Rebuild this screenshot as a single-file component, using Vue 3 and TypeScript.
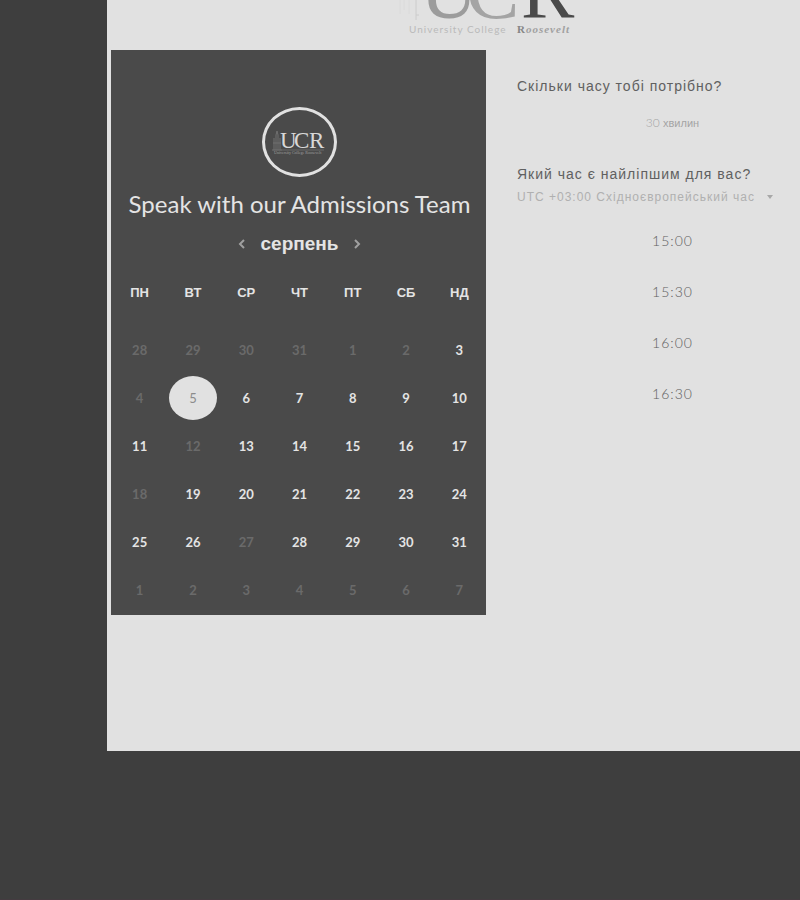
<script setup lang="ts">
import { ref } from 'vue'

interface Day {
  label: number
  open: boolean
}

const weekdays: string[] = ['ПН', 'ВТ', 'СР', 'ЧТ', 'ПТ', 'СБ', 'НД']
const closedDays = [4, 12, 18, 27]

const previous: Day[] = [28, 29, 30, 31].map((label) => ({ label, open: false }))
const current: Day[] = Array.from({ length: 31 }, (_, i) => ({
  label: i + 1,
  open: i > 1 && !closedDays.includes(i + 1),
}))
const next: Day[] = Array.from({ length: 7 }, (_, i) => ({ label: i + 1, open: false }))
const days: Day[] = [...previous, ...current, ...next]
const weeks: Day[][] = Array.from({ length: 6 }, (_, i) => days.slice(i * 7, i * 7 + 7))

const slots: string[] = ['15:00', '15:30', '16:00', '16:30']
const selected = ref(5)

function pick(day: Day) {
  if (day.open) selected.value = day.label
}
</script>

<template>
  <div class="page">
    <main class="panel">
      <header class="brand">
        <svg class="logo" width="180" height="90" viewBox="0 0 180 90" role="img" aria-label="University College Roosevelt">
          <path d="M1 20V54M5 16V50M10 6V54" fill="none" stroke="#dadada" />
          <path d="M17 14V60M20 55H17" fill="none" stroke="#cccccc" />
          <g class="logo-letters">
            <text x="21" y="58" fill="#9c9c9c">U</text>
            <text x="67" y="58" fill="#a4a4a4">C</text>
            <text x="122" y="58" fill="#4a4a4a">R</text>
          </g>
          <text class="logo-name" x="10" y="73">University College</text>
          <text class="logo-name-end" x="118" y="73"><tspan class="upright">R</tspan>oosevelt</text>
        </svg>
      </header>

      <div class="columns">
        <section class="calendar">
          <div class="avatar">
            <svg width="60" height="34" viewBox="0 0 60 34" role="img" aria-label="UCR">
              <path d="M4 25V13M6 25V10L7 6L8 10V25M10 25V13M2 25H12M3 18H11" fill="none" stroke="#707070" />
              <g class="mini-letters">
                <text x="10" y="23">U</text>
                <text x="24" y="23">C</text>
                <text x="39" y="23">R</text>
              </g>
              <path d="M3 25H54" stroke="#686868" />
              <text class="mini-name" x="4" y="29">University College Roosevelt</text>
            </svg>
          </div>
          <h1>Speak with our Admissions Team</h1>
          <div class="month">
            <button type="button" aria-label="Попередній місяць">
              <svg width="8" height="10" viewBox="0 0 8 10"><path d="M6 1L2 5L6 9" /></svg>
            </button>
            <h2>серпень</h2>
            <button type="button" aria-label="Наступний місяць">
              <svg width="8" height="10" viewBox="0 0 8 10"><path d="M2 1L6 5L2 9" /></svg>
            </button>
          </div>
          <table>
            <thead>
              <tr>
                <th v-for="name in weekdays" :key="name" scope="col">{{ name }}</th>
              </tr>
            </thead>
            <tbody>
              <tr v-for="(week, w) in weeks" :key="w">
                <td v-for="(day, d) in week" :key="d">
                  <button
                    type="button"
                    class="day"
                    :class="{ selected: day.open && day.label === selected }"
                    :disabled="!day.open"
                    @click="pick(day)"
                  >
                    {{ day.label }}
                  </button>
                </td>
              </tr>
            </tbody>
          </table>
        </section>

        <section class="booking">
          <h3>Скільки часу тобі потрібно?</h3>
          <button type="button" class="duration">30 <span>хвилин</span></button>
          <h3><label for="zone">Який час є найліпшим для вас?</label></h3>
          <div class="zone">
            <select id="zone">
              <option>UTC +03:00 Східноєвропейський час</option>
            </select>
            <svg width="6" height="4" viewBox="0 0 6 4"><path d="M0 0H6L3 4Z" fill="#a8a8a8" /></svg>
          </div>
          <ul class="slots">
            <li v-for="slot in slots" :key="slot">
              <button type="button">{{ slot }}</button>
            </li>
          </ul>
        </section>
      </div>
    </main>
  </div>
</template>

<style>
body {
  background: #3e3e3e;
}
</style>

<style scoped>
.page {
  box-sizing: border-box;
  min-height: 100vh;
  padding-left: 107px;
  overflow: hidden;
  border-bottom: 1px solid #443b40;
  background: #3e3e3e;
  font-family: "Liberation Sans", Arial, sans-serif;
}
.panel {
  margin-right: -28px;
  padding: 0 0 136px 4px;
  background: #e1e1e1;
}
.brand {
  display: flex;
  align-items: flex-end;
  justify-content: center;
  height: 50px;
  padding-left: 38px;
  overflow: hidden;
}
.brand .logo {
  flex: none;
}
.logo-letters {
  font: 80px "Liberation Serif", serif;
}
.logo-name {
  font: 10px Lato, sans-serif;
  letter-spacing: 1px;
  fill: #bababa;
}
.logo-name-end {
  font: italic bold 11px "Liberation Serif", serif;
  letter-spacing: 1px;
  fill: #a0a0a0;
}
.upright {
  font-style: normal;
  fill: #868686;
}
.columns {
  display: flex;
}
.calendar {
  flex: none;
  box-sizing: border-box;
  width: 375px;
  padding: 57px 0 1px 2px;
  background: #4a4a4a;
  color: #e4e4e4;
}
.avatar {
  display: flex;
  align-items: center;
  justify-content: center;
  box-sizing: border-box;
  width: 75px;
  height: 70px;
  margin: 0 auto;
  border: 3px solid #e1e1e1;
  border-radius: 50%;
}
.mini-letters {
  font: 23px "Liberation Serif", serif;
  fill: #d8d8d8;
}
.mini-name {
  font: 4px "Liberation Serif", serif;
  fill: #a0a0a0;
}
h1 {
  margin: 12px 0 0;
  font: 400 24px/30px Lato, sans-serif;
  text-align: center;
  white-space: nowrap;
}
.month {
  display: flex;
  align-items: center;
  justify-content: center;
  gap: 11px;
  margin-top: 10px;
}
.month h2 {
  margin: 0;
  font-size: 19px;
  font-weight: 700;
  line-height: 30px;
}
.month button {
  display: flex;
  padding: 4px;
  border: 0;
  background: none;
}
.month path {
  fill: none;
  stroke: #a0a0a0;
  stroke-width: 2;
}
table {
  width: 100%;
  margin-top: 19px;
  border-collapse: collapse;
  table-layout: fixed;
}
th {
  height: 30px;
  padding: 0 0 18px;
  font-size: 13px;
  line-height: 30px;
}
td {
  height: 48px;
  padding: 0;
}
.day {
  display: block;
  width: 48px;
  height: 44px;
  margin: 0 auto;
  padding: 0;
  border: 0;
  border-radius: 50%;
  background: none;
  color: #e4e4e4;
  font: 700 13px Lato, sans-serif;
}
.day:disabled {
  color: #6a6a6a;
}
.day.selected {
  background: #e1e1e1;
  color: #8c8c8c;
  font-weight: 400;
}
.booking {
  flex: 1;
  padding: 26px 0 0 31px;
}
h3 {
  margin: 0;
  color: #606060;
  font-size: 14px;
  font-weight: 400;
  line-height: 20px;
  letter-spacing: 1px;
}
.duration {
  display: block;
  width: 100%;
  height: 48px;
  margin: 2px 0 18px;
  padding: 0;
  border: 0;
  background: none;
  color: #a4a4a4;
  font: 300 12px Lato, sans-serif;
}
.duration span {
  font: 11px "Liberation Sans", sans-serif;
}
.zone {
  display: flex;
  align-items: center;
  gap: 12px;
  height: 26px;
}
.zone select {
  appearance: none;
  padding: 0;
  border: 0;
  background: none;
  color: #b0b0b0;
  font: 12px "Liberation Sans", sans-serif;
  letter-spacing: 1px;
}
.slots {
  margin: 7px 0 0;
  padding: 0;
  list-style: none;
}
.slots button {
  display: block;
  width: 100%;
  height: 47px;
  margin-bottom: 4px;
  padding: 0;
  border: 0;
  background: none;
  color: #606060;
  font: 300 14px Lato, sans-serif;
  letter-spacing: 1px;
}
</style>
